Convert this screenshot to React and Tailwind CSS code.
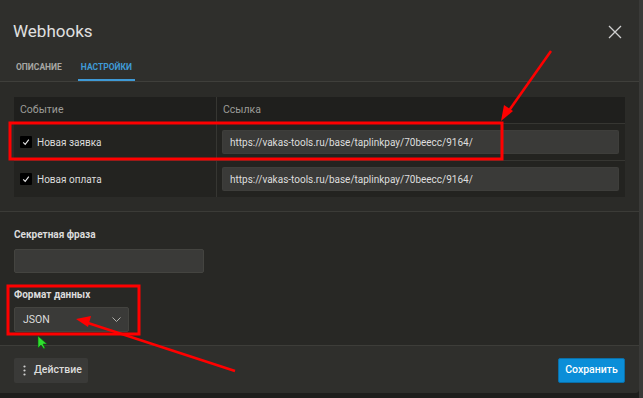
import React from 'react';

function Check() {
  return (
    <span className="w-[12px] h-[12px] bg-black rounded-[1px] flex items-center justify-center">
      <svg width="8" height="8" viewBox="0 0 10 10" fill="none" stroke="#e6e6e6" strokeWidth="1.4">
        <path d="M1.5 5.5 L4 8 L8.5 2" />
      </svg>
    </span>
  );
}

function Row({ label, url }) {
  return (
    <div className="flex h-[37px] border-t border-[#363632] bg-[#232320]">
      <div className="w-[203px] border-r border-[#363632] flex items-center gap-[5px] pl-[6px]">
        <Check />
        <span className="text-[10px] text-[#dcdcdc]">{label}</span>
      </div>
      <div className="flex-1 flex items-center pl-[5px] pr-[6px]">
        <div className="w-full h-[24px] bg-[#3a3a38] border border-[#48484450] rounded-[2px] flex items-center px-[7px] text-[10px] text-[#dedede]">
          {url}
        </div>
      </div>
    </div>
  );
}

export default function App() {
  const url = 'https://vakas-tools.ru/base/taplinkpay/70beecc/9164/';
  return (
    <div className="w-[643px] h-[398px] bg-[#1e1e1c] relative overflow-hidden flex" style={{ fontFamily: 'Roboto, "Liberation Sans", sans-serif' }}>
      <div className="w-[639px] h-[393px] flex flex-col bg-[#282825] rounded-br-[4px] overflow-hidden">
        {/* header */}
        <div className="h-[82px] bg-[#2f2f2c] border-b border-[#3f3f3b] flex flex-col px-[14px]">
          <div className="flex items-center justify-between h-[56px] pt-[8px]">
            <h1 className="text-[17px] text-[#e0e0e0] font-normal -ml-[1px]">Webhooks</h1>
            <svg width="14" height="14" viewBox="0 0 14 14" stroke="#d0d0d0" strokeWidth="1.3" className="mr-[3px]">
              <path d="M1 1 L13 13 M13 1 L1 13" />
            </svg>
          </div>
          <div className="flex gap-[14px] text-[8.5px] font-bold uppercase">
            <div className="h-[25px] pt-[5px] text-[#a8a8a4] px-[2px]">Описание</div>
            <div className="h-[25px] pt-[5px] text-[#3f9ad6] border-b-2 border-[#3f9ad6] px-[3px]">Настройки</div>
          </div>
        </div>

        {/* table section */}
        <div className="bg-[#2b2b28] border-b border-[#3b3b37] pt-[15px] pb-[14px] pl-[14px] pr-[14px]">
          <div className="w-[611px] bg-[#1f1f1d]">
            <div className="flex h-[26px]">
              <div className="w-[203px] border-r border-[#363632] flex items-center pl-[6px] text-[10.5px] text-[#9c9c98]">Событие</div>
              <div className="flex-1 flex items-center pl-[6px] text-[10.5px] text-[#9c9c98]">Ссылка</div>
            </div>
            <Row label="Новая заявка" url={url} />
            <Row label="Новая оплата" url={url} />
          </div>
        </div>

        {/* form */}
        <div className="flex-1 bg-[#282825] px-[14px] pt-[17px] border-b border-[#3d3d39]">
          <div className="text-[10px] font-bold text-[#dcdcdc] leading-[12px]">Секретная фраза</div>
          <div className="w-[190px] h-[24px] mt-[8px] bg-[#3a3a38] border border-[#444440] rounded-[2px]"></div>
          <div className="text-[10px] font-bold text-[#dcdcdc] leading-[12px] mt-[16px]">Формат данных</div>
          <div className="w-[115px] h-[25px] mt-[6px] bg-[#3a3a38] border border-[#444440] rounded-[2px] flex items-center justify-between pl-[8px] pr-[7px]">
            <span className="text-[10.5px] text-[#dcdcdc]">JSON</span>
            <svg width="9" height="6" viewBox="0 0 9 6" fill="none" stroke="#b0b0ac" strokeWidth="1">
              <path d="M0.5 0.5 L4.5 4.5 L8.5 0.5" />
            </svg>
          </div>
        </div>

        {/* footer */}
        <div className="h-[47px] bg-[#2f2f2c] flex items-center justify-between px-[14px] pt-[1px]">
          <button className="h-[25px] w-[74px] bg-[#3a3a38] rounded-[2px] flex items-center gap-[8px] pl-[9px] text-[10.5px] text-[#dcdcdc] font-medium">
            <svg width="3" height="11" viewBox="0 0 3 11" fill="#d0d0d0">
              <circle cx="1.5" cy="1.5" r="1.1" />
              <circle cx="1.5" cy="5.5" r="1.1" />
              <circle cx="1.5" cy="9.5" r="1.1" />
            </svg>
            Действие
          </button>
          <button className="h-[25px] w-[67px] bg-[#0b8ed8] rounded-[2px] border border-[#0a6fa8] text-[10.5px] text-white font-medium">
            Сохранить
          </button>
        </div>
      </div>
      <div className="w-[4px] h-full bg-[#3a3a38]"></div>

      {/* annotations */}
      <svg className="absolute inset-0 pointer-events-none" width="643" height="398" viewBox="0 0 643 398">
        <rect x="10" y="123" width="492" height="36" fill="none" stroke="#ff0000" strokeWidth="3" />
        <rect x="8" y="286" width="131" height="48" fill="none" stroke="#ff0000" strokeWidth="3" />
        <line x1="551" y1="51" x2="508" y2="112" stroke="#ff0000" strokeWidth="2.5" />
        <polygon points="501,121 504,105 513,111" fill="#ff0000" />
        <line x1="235" y1="371" x2="88" y2="323" stroke="#ff0000" strokeWidth="2.5" />
        <polygon points="76,319 91,316 88,327" fill="#ff0000" />
        <polygon points="38,336 38,348 41,345 44,349 45,348 43,344 47,344" fill="#2fe02f" stroke="#0a5a0a" strokeWidth="0.6" />
      </svg>
    </div>
  );
}
